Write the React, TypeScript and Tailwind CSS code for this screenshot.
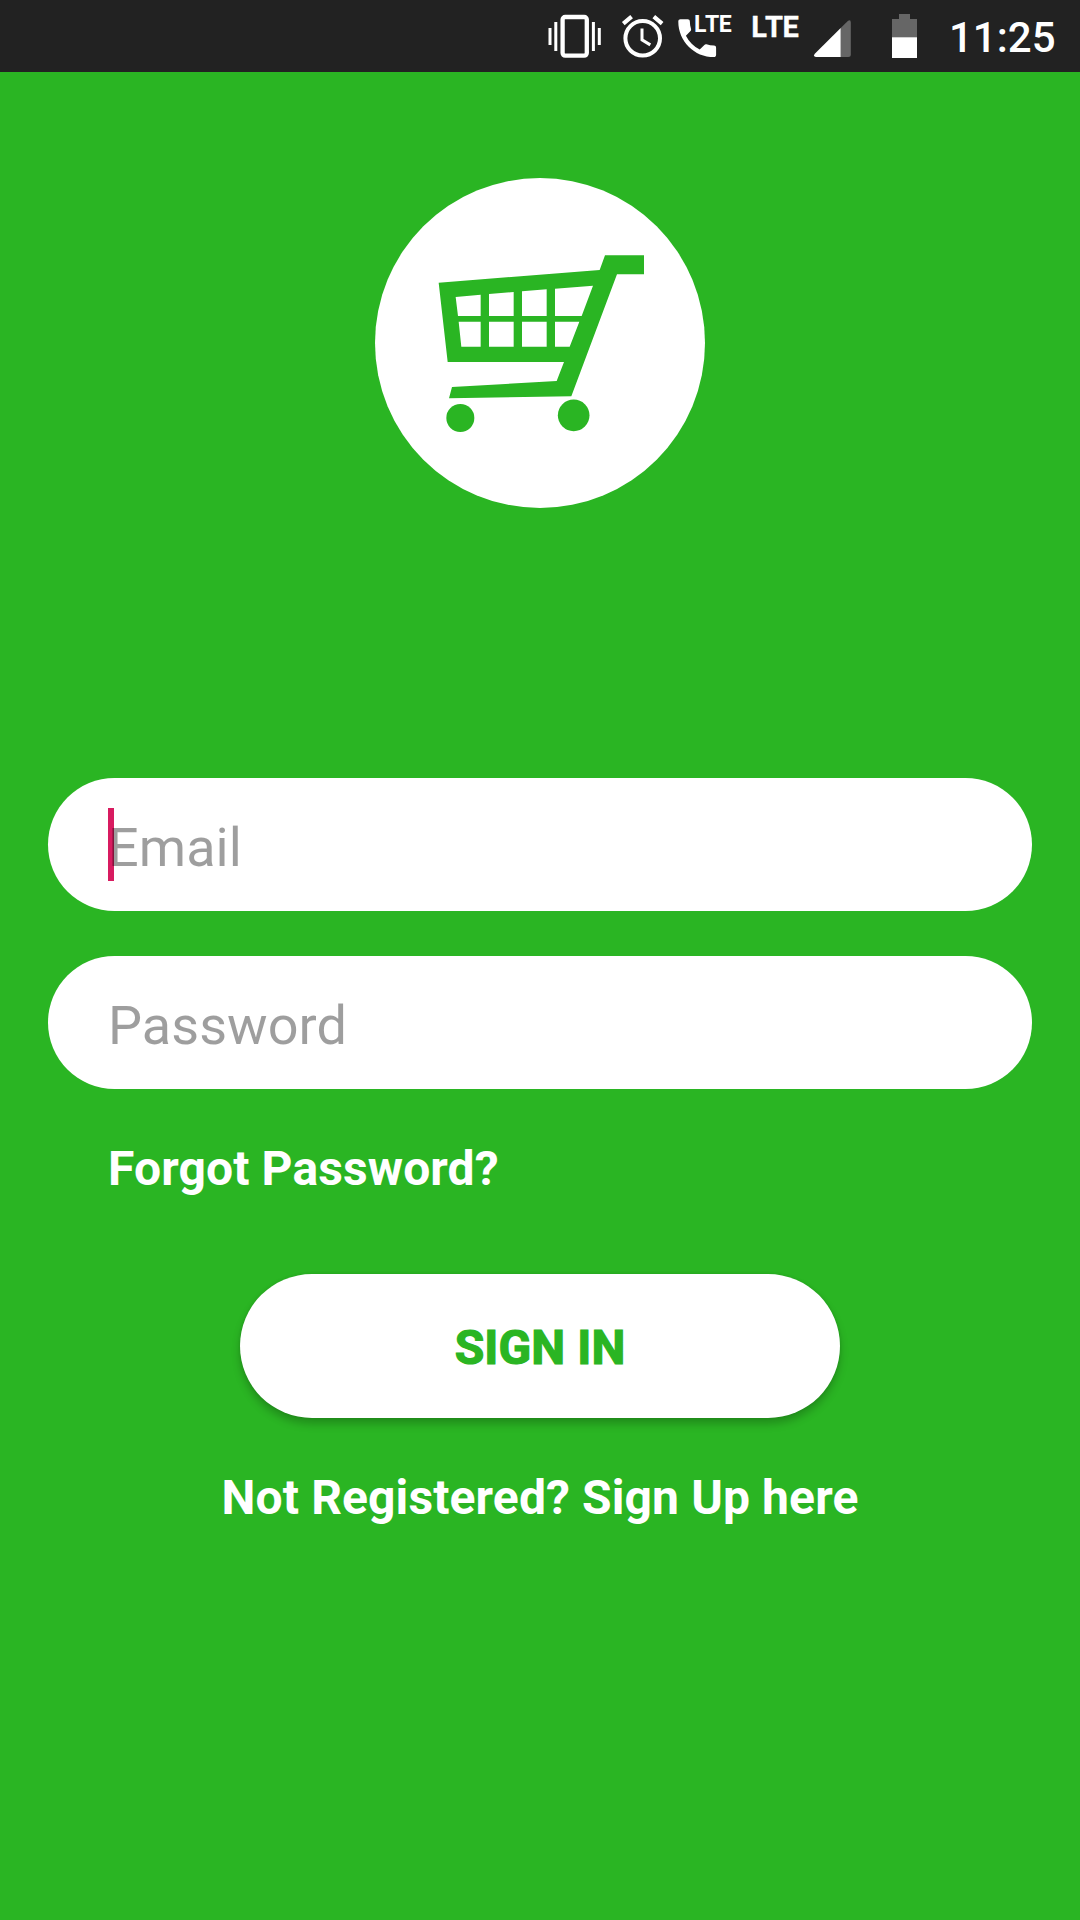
import React from "react";

function VibrateIcon() {
  return (
    <svg className="h-[72px] w-[54px]" viewBox="547 0 54 72" fill="#fff">
      <rect x="562.6" y="17" width="24.2" height="38.7" rx="2.6" fill="none" stroke="#fff" strokeWidth="4.3" />
      <rect x="548.5" y="28" width="3" height="17" />
      <rect x="554.3" y="22" width="3" height="29" />
      <rect x="591.9" y="22" width="3" height="29" />
      <rect x="597.8" y="28" width="3" height="17" />
    </svg>
  );
}

function AlarmIcon() {
  return (
    <svg className="ml-[20px] h-[72px] w-[44px]" viewBox="621 0 44 72" fill="none" stroke="#fff">
      <circle cx="642.7" cy="38.3" r="17.3" strokeWidth="4" />
      <path d="M642 28.6V39.8L650.3 44.9" strokeWidth="3" />
      <path d="M623.3 23.6L631.6 16.7M653.8 16.7L662.1 23.6" strokeWidth="4.2" />
    </svg>
  );
}

function LteCallIcon() {
  return (
    <svg className="ml-[12px] h-[72px] w-[57px]" viewBox="677 0 57 72" fill="#fff">
      <path
        transform="translate(672 13) scale(2.1)"
        d="M6.62 10.79c1.44 2.83 3.76 5.14 6.59 6.59l2.2-2.2c.27-.27.67-.36 1.02-.24 1.12.37 2.33.57 3.57.57.55 0 1 .45 1 1V20c0 .55-.45 1-1 1-9.39 0-17-7.61-17-17 0-.55.45-1 1-1h3.5c.55 0 1 .45 1 1 0 1.25.2 2.45.57 3.57.11.35.03.74-.25 1.02l-2.2 2.2z"
      />
      <text x="694.1 705.1 718.7" y="32" className="font-['Roboto'] text-[23px] font-bold">
        LTE
      </text>
    </svg>
  );
}

function LteIcon() {
  return (
    <svg className="ml-[16px] h-[72px] w-[50px]" viewBox="750 0 50 72" fill="#fff">
      <text x="751.2 765 782.6" y="36.9" stroke="#fff" strokeWidth="0.3" className="font-['Roboto'] text-[29px] font-bold">
        LTE
      </text>
    </svg>
  );
}

function SignalIcon() {
  return (
    <svg className="ml-[13px] h-[72px] w-[38px]" viewBox="813 0 38 72">
      <path d="M840.7 28L847.8 20.9Q850.8 19 850.8 22.5V54.5Q850.8 57 848.3 57H840.7Z" fill="#666" />
      <path d="M840.7 28V57H816Q812.8 56.3 814.8 53.8Z" fill="#fff" />
    </svg>
  );
}

function BatteryIcon() {
  return (
    <svg className="ml-[40px] h-[72px] w-[27px]" viewBox="891 0 27 72" shapeRendering="crispEdges">
      <path d="M899 14H910V19H917V37H892V19H899Z" fill="#666" />
      <rect x="892" y="37" width="25" height="21" fill="#fff" />
      <rect x="892" y="37" width="25" height="1" fill="#d0d0d0" />
    </svg>
  );
}

function CartLogo() {
  return (
    <div className="mt-[106px] size-[330px] overflow-hidden rounded-full bg-white">
      <svg className="size-full" viewBox="30 39 990 990" fill="#2ab523">
        <path
          fillRule="evenodd"
          d="M221 353L704 315L720 271H837V328H756L619 694L252 700L261 666L575 648L597 591H248Z
             M272 396L347 389V453H279Z M372 387L446 381V453H372Z M471 379L545 373V453H471Z M570 371L684 362L650 453H570Z
             M281 470H347V545H289Z M372 470H446V545H372Z M471 470H545V545H471Z M570 470H643L614 545H570Z"
        />
        <circle cx="286" cy="759" r="42" />
        <circle cx="626" cy="751" r="47.5" />
      </svg>
    </div>
  );
}

function Field({ label, focused = false }: { label: string; focused?: boolean }) {
  return (
    <div className="relative flex h-[133px] w-[984px] items-center rounded-full bg-white pl-[60px]">
      {focused && <span className="absolute top-[30px] left-[60px] h-[73px] w-[6px] bg-[#d81b60]" />}
      <span className="relative pt-[7px] text-[54px] leading-[64px] tracking-[0.05px] text-black/38">{label}</span>
    </div>
  );
}

export default function App() {
  return (
    <div className="flex h-[1920px] w-[1080px] flex-col overflow-hidden bg-[#2ab523] font-['Roboto',sans-serif]">
      <header className="flex h-[72px] shrink-0 items-center justify-end bg-[#222222] pr-[24px] text-white">
        <VibrateIcon />
        <AlarmIcon />
        <LteCallIcon />
        <LteIcon />
        <SignalIcon />
        <BatteryIcon />
        <span className="ml-[31px] w-[107px] pt-[4px] text-[42px] leading-[48px] font-medium whitespace-nowrap">11:25</span>
      </header>
      <main className="flex flex-col items-center">
        <CartLogo />
        <form className="mt-[270px] flex flex-col items-center">
          <Field label="Email" focused />
          <div className="h-[45px]" />
          <Field label="Password" />
          <a className="mt-[52px] self-start pl-[60px] text-[48px] leading-[56px] font-bold tracking-[0.12px] text-white">
            Forgot Password?
          </a>
          <button
            type="button"
            className="mt-[77px] h-[144px] w-[600px] rounded-full bg-white pt-[4px] text-[48px] font-bold tracking-[0.1px] text-[#2ab523] shadow-[0_6px_8px_rgba(0,0,0,0.22),0_0_3px_rgba(0,0,0,0.1)] [-webkit-text-stroke:1.2px_#2ab523]"
          >
            SIGN IN
          </button>
        </form>
        <a className="mt-[52px] text-[48px] leading-[56px] font-bold tracking-[0.12px] text-white">Not Registered? Sign Up here</a>
      </main>
    </div>
  );
}
